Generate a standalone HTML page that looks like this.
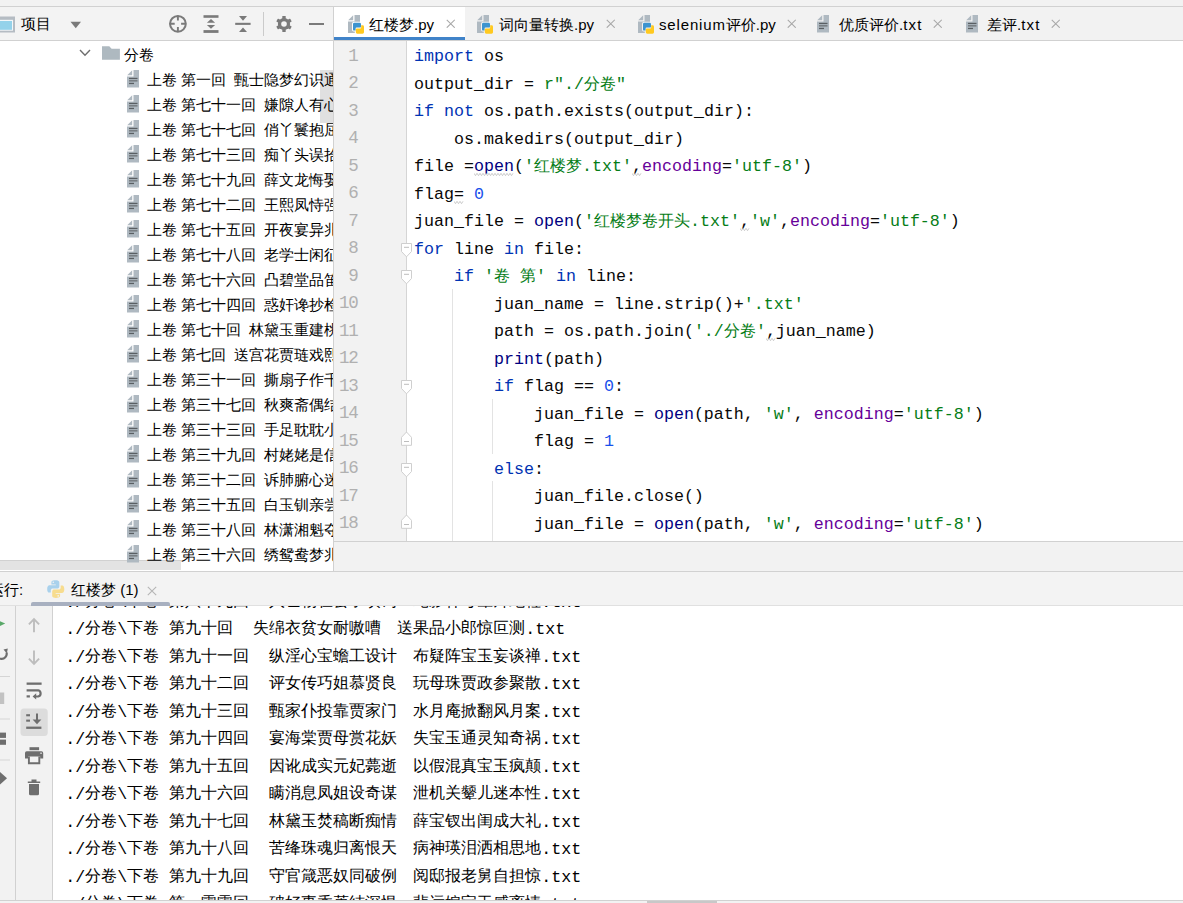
<!DOCTYPE html><html><head><meta charset="utf-8"><style>
html,body{margin:0;padding:0}body{width:1183px;height:903px;overflow:hidden;position:relative;background:#f2f2f2;font-family:'Liberation Sans',sans-serif;}
div,span{box-sizing:border-box}
.abs{position:absolute}
.t{position:absolute;white-space:pre;line-height:25px;font-size:15px;color:#000}
.cl{position:absolute;left:0;white-space:pre;height:27.5px;line-height:27.5px;font-size:16.667px;color:#080808;font-family:'Liberation Mono',monospace;}
.kw{color:#0033b3}.st{color:#067d17}.nu{color:#1750eb}.pa{color:#660099}.bi{color:#000080}
.cj{font-size:16px}
</style></head><body>
<div style="position:absolute;left:0px;top:0px;width:1183px;height:6px;background:#f2f2f2"></div>
<div style="position:absolute;left:0px;top:6px;width:1183px;height:1px;background:#d1d1d1"></div>
<div style="position:absolute;left:0px;top:7px;width:333px;height:33px;background:#f3f3f3"></div>
<div style="position:absolute;left:0px;top:40px;width:333px;height:1px;background:#d1d1d1"></div>
<div style="position:absolute;left:0px;top:41px;width:333px;height:530px;background:#fff"></div>
<div style="position:absolute;left:333px;top:7px;width:1px;height:564px;background:#d1d1d1"></div>
<div style="position:absolute;left:334px;top:7px;width:849px;height:33px;background:#f2f2f2"></div>
<div style="position:absolute;left:334px;top:40px;width:849px;height:1px;background:#d1d1d1"></div>
<div style="position:absolute;left:334px;top:41px;width:849px;height:500px;background:#fff"></div>
<div style="position:absolute;left:334px;top:41px;width:72px;height:500px;background:#f2f2f2"></div>
<div style="position:absolute;left:406px;top:41px;width:1px;height:500px;background:#d5d5d5"></div>
<div style="position:absolute;left:334px;top:541px;width:849px;height:1px;background:#d1d1d1"></div>
<div style="position:absolute;left:334px;top:542px;width:849px;height:29px;background:#f2f2f2"></div>
<div style="position:absolute;left:0px;top:571px;width:1183px;height:1px;background:#d1d1d1"></div>
<div style="position:absolute;left:0px;top:572px;width:1183px;height:33px;background:#f3f3f3"></div>
<div style="position:absolute;left:0px;top:605px;width:1183px;height:1px;background:#e0e0e0"></div>
<div style="position:absolute;left:0px;top:606px;width:1183px;height:294px;background:#fff"></div>
<div style="position:absolute;left:0px;top:606px;width:52px;height:294px;background:#f2f2f2"></div>
<div style="position:absolute;left:15px;top:606px;width:1px;height:294px;background:#d1d1d1"></div>
<div style="position:absolute;left:52px;top:606px;width:1px;height:294px;background:#d1d1d1"></div>
<div style="position:absolute;left:0px;top:900px;width:1183px;height:1px;background:#d1d1d1"></div>
<div style="position:absolute;left:0px;top:901px;width:1183px;height:2px;background:#f2f2f2"></div>
<div style="position:absolute;left:647px;top:901px;width:70px;height:2px;background:#c8c8c8"></div>
<svg class="abs" style="left:0;top:16px" width="16" height="17" viewBox="0 0 16 17"><rect x="-2" y="0.5" width="17" height="16" fill="#b5bcc3"/><rect x="-2" y="3.8" width="15" height="10.9" fill="#f4f7f9"/><rect x="-2" y="5" width="14" height="8.8" fill="#94d2ea"/></svg>
<div class="t" style="left:21px;top:10.5px;font-size:15px">项目</div>
<svg class="abs" style="left:70px;top:21px" width="12" height="8" viewBox="0 0 12 8"><path d="M0.5 0.8 H11 L5.75 7.2 Z" fill="#7a7a7a"/></svg>
<svg class="abs" style="left:168px;top:14px" width="20" height="20" viewBox="0 0 20 20"><circle cx="9.9" cy="9.8" r="7.9" fill="none" stroke="#7a7a7a" stroke-width="2"/><path d="M9.9 1.8 V6.6 M9.9 13 V17.8 M1.9 9.8 H6.7 M13.1 9.8 H17.9" stroke="#7a7a7a" stroke-width="1.9"/></svg>
<svg class="abs" style="left:203px;top:15px" width="16" height="19" viewBox="0 0 16 19"><rect x="0.5" y="0.2" width="15" height="2.6" fill="#7a7a7a"/><rect x="0.5" y="15.1" width="15" height="2.8" fill="#7a7a7a"/><path d="M3.9 7.8 H12.1 L8 4 Z M3.9 9.9 H12.1 L8 13.7 Z" fill="#7a7a7a"/></svg>
<svg class="abs" style="left:235px;top:15px" width="16" height="18" viewBox="0 0 16 18"><rect x="0.2" y="7.8" width="15.4" height="2.1" fill="#7a7a7a"/><path d="M4 1 H12 L8 5.7 Z M4 16.9 H12 L8 12.4 Z" fill="#7a7a7a"/></svg>
<div style="position:absolute;left:263px;top:12px;width:1px;height:24px;background:#cbcbcb"></div>
<svg class="abs" style="left:276px;top:16px" width="16" height="16" viewBox="0 0 16 16"><g fill="#7a7a7a"><circle cx="8" cy="8" r="6.1"/><rect x="6.3" y="0" width="3.4" height="16" rx="0.6"/><rect x="6.3" y="0" width="3.4" height="16" rx="0.6" transform="rotate(60 8 8)"/><rect x="6.3" y="0" width="3.4" height="16" rx="0.6" transform="rotate(120 8 8)"/></g><circle cx="8" cy="8" r="2.8" fill="#f3f3f3"/></svg>
<div style="position:absolute;left:309px;top:22.8px;width:15.4px;height:2.2px;background:#7a7a7a"></div>
<div class="abs" style="left:0;top:41px;width:333px;height:530px;overflow:hidden">
<svg class="abs" style="left:79px;top:8px" width="12" height="8" viewBox="0 0 12 8"><path d="M1 1 L6 6.3 L11 1" fill="none" stroke="#6e6e6e" stroke-width="1.4"/></svg>
<svg class="abs" style="left:102px;top:5px" width="18" height="14" viewBox="0 0 18 14"><path d="M0 0.3 H7.3 L9.6 2.7 H17.9 V13.7 H0 Z" fill="#aeb9c0"/></svg>
<div class="t" style="left:124px;top:0.5px;">分卷</div>
<div style="position:absolute;left:320px;top:29px;width:13px;height:52.5px;background:rgba(0,0,0,0.12)"></div>
<div style="position:absolute;left:0px;top:518.5px;width:181px;height:10px;background:rgba(0,0,0,0.11);border-top:1px solid rgba(0,0,0,0.08)"></div>
<svg class="abs" style="left:127px;top:29.1px" width="18" height="20" viewBox="0 0 18 20"><path d="M6.5 0 H12 V17.6 H0 V6.5 H6.5 Z" fill="#afb9c1"/><path d="M5.2 0.2 V5.2 H0.2 Z" fill="#afb9c1"/><rect x="2" y="7.8" width="8.5" height="1.3" fill="#5a5f63"/><rect x="2" y="10.2" width="8.5" height="1.3" fill="#6d7276"/><rect x="2" y="12.8" width="5" height="1.3" fill="#5a5f63"/></svg>
<div class="t" style="left:147px;top:25.5px;word-spacing:-0.25px">上卷 第一回  甄士隐梦幻识通灵　贾雨村风尘怀闺秀</div>
<svg class="abs" style="left:127px;top:54.1px" width="18" height="20" viewBox="0 0 18 20"><path d="M6.5 0 H12 V17.6 H0 V6.5 H6.5 Z" fill="#afb9c1"/><path d="M5.2 0.2 V5.2 H0.2 Z" fill="#afb9c1"/><rect x="2" y="7.8" width="8.5" height="1.3" fill="#5a5f63"/><rect x="2" y="10.2" width="8.5" height="1.3" fill="#6d7276"/><rect x="2" y="12.8" width="5" height="1.3" fill="#5a5f63"/></svg>
<div class="t" style="left:147px;top:50.5px;word-spacing:-0.25px">上卷 第七十一回  嫌隙人有心生嫌隙　鸳鸯女无意遇鸳鸯</div>
<svg class="abs" style="left:127px;top:79.1px" width="18" height="20" viewBox="0 0 18 20"><path d="M6.5 0 H12 V17.6 H0 V6.5 H6.5 Z" fill="#afb9c1"/><path d="M5.2 0.2 V5.2 H0.2 Z" fill="#afb9c1"/><rect x="2" y="7.8" width="8.5" height="1.3" fill="#5a5f63"/><rect x="2" y="10.2" width="8.5" height="1.3" fill="#6d7276"/><rect x="2" y="12.8" width="5" height="1.3" fill="#5a5f63"/></svg>
<div class="t" style="left:147px;top:75.5px;word-spacing:-0.25px">上卷 第七十七回  俏丫鬟抱屈夭风流　美优伶斩情归水月</div>
<svg class="abs" style="left:127px;top:104.1px" width="18" height="20" viewBox="0 0 18 20"><path d="M6.5 0 H12 V17.6 H0 V6.5 H6.5 Z" fill="#afb9c1"/><path d="M5.2 0.2 V5.2 H0.2 Z" fill="#afb9c1"/><rect x="2" y="7.8" width="8.5" height="1.3" fill="#5a5f63"/><rect x="2" y="10.2" width="8.5" height="1.3" fill="#6d7276"/><rect x="2" y="12.8" width="5" height="1.3" fill="#5a5f63"/></svg>
<div class="t" style="left:147px;top:100.5px;word-spacing:-0.25px">上卷 第七十三回  痴丫头误拾绣春囊　懦小姐不问累金凤</div>
<svg class="abs" style="left:127px;top:129.1px" width="18" height="20" viewBox="0 0 18 20"><path d="M6.5 0 H12 V17.6 H0 V6.5 H6.5 Z" fill="#afb9c1"/><path d="M5.2 0.2 V5.2 H0.2 Z" fill="#afb9c1"/><rect x="2" y="7.8" width="8.5" height="1.3" fill="#5a5f63"/><rect x="2" y="10.2" width="8.5" height="1.3" fill="#6d7276"/><rect x="2" y="12.8" width="5" height="1.3" fill="#5a5f63"/></svg>
<div class="t" style="left:147px;top:125.5px;word-spacing:-0.25px">上卷 第七十九回  薛文龙悔娶河东狮　贾迎春误嫁中山狼</div>
<svg class="abs" style="left:127px;top:154.1px" width="18" height="20" viewBox="0 0 18 20"><path d="M6.5 0 H12 V17.6 H0 V6.5 H6.5 Z" fill="#afb9c1"/><path d="M5.2 0.2 V5.2 H0.2 Z" fill="#afb9c1"/><rect x="2" y="7.8" width="8.5" height="1.3" fill="#5a5f63"/><rect x="2" y="10.2" width="8.5" height="1.3" fill="#6d7276"/><rect x="2" y="12.8" width="5" height="1.3" fill="#5a5f63"/></svg>
<div class="t" style="left:147px;top:150.5px;word-spacing:-0.25px">上卷 第七十二回  王熙凤恃强羞说病　来旺妇倚势霸成亲</div>
<svg class="abs" style="left:127px;top:179.1px" width="18" height="20" viewBox="0 0 18 20"><path d="M6.5 0 H12 V17.6 H0 V6.5 H6.5 Z" fill="#afb9c1"/><path d="M5.2 0.2 V5.2 H0.2 Z" fill="#afb9c1"/><rect x="2" y="7.8" width="8.5" height="1.3" fill="#5a5f63"/><rect x="2" y="10.2" width="8.5" height="1.3" fill="#6d7276"/><rect x="2" y="12.8" width="5" height="1.3" fill="#5a5f63"/></svg>
<div class="t" style="left:147px;top:175.5px;word-spacing:-0.25px">上卷 第七十五回  开夜宴异兆发悲音　赏中秋新词得佳谶</div>
<svg class="abs" style="left:127px;top:204.1px" width="18" height="20" viewBox="0 0 18 20"><path d="M6.5 0 H12 V17.6 H0 V6.5 H6.5 Z" fill="#afb9c1"/><path d="M5.2 0.2 V5.2 H0.2 Z" fill="#afb9c1"/><rect x="2" y="7.8" width="8.5" height="1.3" fill="#5a5f63"/><rect x="2" y="10.2" width="8.5" height="1.3" fill="#6d7276"/><rect x="2" y="12.8" width="5" height="1.3" fill="#5a5f63"/></svg>
<div class="t" style="left:147px;top:200.5px;word-spacing:-0.25px">上卷 第七十八回  老学士闲征姽婳词　痴公子杜撰芙蓉诔</div>
<svg class="abs" style="left:127px;top:229.1px" width="18" height="20" viewBox="0 0 18 20"><path d="M6.5 0 H12 V17.6 H0 V6.5 H6.5 Z" fill="#afb9c1"/><path d="M5.2 0.2 V5.2 H0.2 Z" fill="#afb9c1"/><rect x="2" y="7.8" width="8.5" height="1.3" fill="#5a5f63"/><rect x="2" y="10.2" width="8.5" height="1.3" fill="#6d7276"/><rect x="2" y="12.8" width="5" height="1.3" fill="#5a5f63"/></svg>
<div class="t" style="left:147px;top:225.5px;word-spacing:-0.25px">上卷 第七十六回  凸碧堂品笛感凄清　凹晶馆联诗悲寂寞</div>
<svg class="abs" style="left:127px;top:254.1px" width="18" height="20" viewBox="0 0 18 20"><path d="M6.5 0 H12 V17.6 H0 V6.5 H6.5 Z" fill="#afb9c1"/><path d="M5.2 0.2 V5.2 H0.2 Z" fill="#afb9c1"/><rect x="2" y="7.8" width="8.5" height="1.3" fill="#5a5f63"/><rect x="2" y="10.2" width="8.5" height="1.3" fill="#6d7276"/><rect x="2" y="12.8" width="5" height="1.3" fill="#5a5f63"/></svg>
<div class="t" style="left:147px;top:250.5px;word-spacing:-0.25px">上卷 第七十四回  惑奸谗抄检大观园　矢孤介杜绝宁国府</div>
<svg class="abs" style="left:127px;top:279.1px" width="18" height="20" viewBox="0 0 18 20"><path d="M6.5 0 H12 V17.6 H0 V6.5 H6.5 Z" fill="#afb9c1"/><path d="M5.2 0.2 V5.2 H0.2 Z" fill="#afb9c1"/><rect x="2" y="7.8" width="8.5" height="1.3" fill="#5a5f63"/><rect x="2" y="10.2" width="8.5" height="1.3" fill="#6d7276"/><rect x="2" y="12.8" width="5" height="1.3" fill="#5a5f63"/></svg>
<div class="t" style="left:147px;top:275.5px;word-spacing:-0.25px">上卷 第七十回  林黛玉重建桃花社　史湘云偶填柳絮词</div>
<svg class="abs" style="left:127px;top:304.1px" width="18" height="20" viewBox="0 0 18 20"><path d="M6.5 0 H12 V17.6 H0 V6.5 H6.5 Z" fill="#afb9c1"/><path d="M5.2 0.2 V5.2 H0.2 Z" fill="#afb9c1"/><rect x="2" y="7.8" width="8.5" height="1.3" fill="#5a5f63"/><rect x="2" y="10.2" width="8.5" height="1.3" fill="#6d7276"/><rect x="2" y="12.8" width="5" height="1.3" fill="#5a5f63"/></svg>
<div class="t" style="left:147px;top:300.5px;word-spacing:-0.25px">上卷 第七回  送宫花贾琏戏熙凤　宴宁府宝玉会秦钟</div>
<svg class="abs" style="left:127px;top:329.1px" width="18" height="20" viewBox="0 0 18 20"><path d="M6.5 0 H12 V17.6 H0 V6.5 H6.5 Z" fill="#afb9c1"/><path d="M5.2 0.2 V5.2 H0.2 Z" fill="#afb9c1"/><rect x="2" y="7.8" width="8.5" height="1.3" fill="#5a5f63"/><rect x="2" y="10.2" width="8.5" height="1.3" fill="#6d7276"/><rect x="2" y="12.8" width="5" height="1.3" fill="#5a5f63"/></svg>
<div class="t" style="left:147px;top:325.5px;word-spacing:-0.25px">上卷 第三十一回  撕扇子作千金一笑　因麒麟伏白首双星</div>
<svg class="abs" style="left:127px;top:354.1px" width="18" height="20" viewBox="0 0 18 20"><path d="M6.5 0 H12 V17.6 H0 V6.5 H6.5 Z" fill="#afb9c1"/><path d="M5.2 0.2 V5.2 H0.2 Z" fill="#afb9c1"/><rect x="2" y="7.8" width="8.5" height="1.3" fill="#5a5f63"/><rect x="2" y="10.2" width="8.5" height="1.3" fill="#6d7276"/><rect x="2" y="12.8" width="5" height="1.3" fill="#5a5f63"/></svg>
<div class="t" style="left:147px;top:350.5px;word-spacing:-0.25px">上卷 第三十七回  秋爽斋偶结海棠社　蘅芜苑夜拟菊花题</div>
<svg class="abs" style="left:127px;top:379.1px" width="18" height="20" viewBox="0 0 18 20"><path d="M6.5 0 H12 V17.6 H0 V6.5 H6.5 Z" fill="#afb9c1"/><path d="M5.2 0.2 V5.2 H0.2 Z" fill="#afb9c1"/><rect x="2" y="7.8" width="8.5" height="1.3" fill="#5a5f63"/><rect x="2" y="10.2" width="8.5" height="1.3" fill="#6d7276"/><rect x="2" y="12.8" width="5" height="1.3" fill="#5a5f63"/></svg>
<div class="t" style="left:147px;top:375.5px;word-spacing:-0.25px">上卷 第三十三回  手足耽耽小动唇舌　不肖种种大承笞挞</div>
<svg class="abs" style="left:127px;top:404.1px" width="18" height="20" viewBox="0 0 18 20"><path d="M6.5 0 H12 V17.6 H0 V6.5 H6.5 Z" fill="#afb9c1"/><path d="M5.2 0.2 V5.2 H0.2 Z" fill="#afb9c1"/><rect x="2" y="7.8" width="8.5" height="1.3" fill="#5a5f63"/><rect x="2" y="10.2" width="8.5" height="1.3" fill="#6d7276"/><rect x="2" y="12.8" width="5" height="1.3" fill="#5a5f63"/></svg>
<div class="t" style="left:147px;top:400.5px;word-spacing:-0.25px">上卷 第三十九回  村姥姥是信口开合　情哥哥偏寻根究底</div>
<svg class="abs" style="left:127px;top:429.1px" width="18" height="20" viewBox="0 0 18 20"><path d="M6.5 0 H12 V17.6 H0 V6.5 H6.5 Z" fill="#afb9c1"/><path d="M5.2 0.2 V5.2 H0.2 Z" fill="#afb9c1"/><rect x="2" y="7.8" width="8.5" height="1.3" fill="#5a5f63"/><rect x="2" y="10.2" width="8.5" height="1.3" fill="#6d7276"/><rect x="2" y="12.8" width="5" height="1.3" fill="#5a5f63"/></svg>
<div class="t" style="left:147px;top:425.5px;word-spacing:-0.25px">上卷 第三十二回  诉肺腑心迷活宝玉　含耻辱情烈死金钏</div>
<svg class="abs" style="left:127px;top:454.1px" width="18" height="20" viewBox="0 0 18 20"><path d="M6.5 0 H12 V17.6 H0 V6.5 H6.5 Z" fill="#afb9c1"/><path d="M5.2 0.2 V5.2 H0.2 Z" fill="#afb9c1"/><rect x="2" y="7.8" width="8.5" height="1.3" fill="#5a5f63"/><rect x="2" y="10.2" width="8.5" height="1.3" fill="#6d7276"/><rect x="2" y="12.8" width="5" height="1.3" fill="#5a5f63"/></svg>
<div class="t" style="left:147px;top:450.5px;word-spacing:-0.25px">上卷 第三十五回  白玉钏亲尝莲叶羹　黄金莺巧结梅花络</div>
<svg class="abs" style="left:127px;top:479.1px" width="18" height="20" viewBox="0 0 18 20"><path d="M6.5 0 H12 V17.6 H0 V6.5 H6.5 Z" fill="#afb9c1"/><path d="M5.2 0.2 V5.2 H0.2 Z" fill="#afb9c1"/><rect x="2" y="7.8" width="8.5" height="1.3" fill="#5a5f63"/><rect x="2" y="10.2" width="8.5" height="1.3" fill="#6d7276"/><rect x="2" y="12.8" width="5" height="1.3" fill="#5a5f63"/></svg>
<div class="t" style="left:147px;top:475.5px;word-spacing:-0.25px">上卷 第三十八回  林潇湘魁夺菊花诗　薛蘅芜讽和螃蟹咏</div>
<svg class="abs" style="left:127px;top:504.1px" width="18" height="20" viewBox="0 0 18 20"><path d="M6.5 0 H12 V17.6 H0 V6.5 H6.5 Z" fill="#afb9c1"/><path d="M5.2 0.2 V5.2 H0.2 Z" fill="#afb9c1"/><rect x="2" y="7.8" width="8.5" height="1.3" fill="#5a5f63"/><rect x="2" y="10.2" width="8.5" height="1.3" fill="#6d7276"/><rect x="2" y="12.8" width="5" height="1.3" fill="#5a5f63"/></svg>
<div class="t" style="left:147px;top:500.5px;word-spacing:-0.25px">上卷 第三十六回  绣鸳鸯梦兆绛芸轩　识分定情悟梨香院</div>
</div>
<div style="position:absolute;left:334px;top:7px;width:131px;height:30px;background:#fff"></div>
<div style="position:absolute;left:334px;top:37px;width:131px;height:3px;background:#4083c9"></div>
<svg class="abs" style="left:348px;top:15px" width="18" height="20" viewBox="0 0 18 20"><path d="M6.5 0 H12 V17.9 H0 V6.5 H6.5 Z" fill="#afb9c1"/><path d="M5.2 0.2 V5.2 H0.2 Z" fill="#afb9c1"/><path d="M6.4 6.8 H12.2 Q14 6.8 14 8.6 V9.3 H15.2 Q17 9.3 17 11.1 V17.6 Q17 19.7 14.9 19.7 H8.6 Q6.8 19.7 6.8 17.9 V16.6 H5.8 Q4 16.6 4 14.8 V8.8 Q4 6.8 6.4 6.8 Z" fill="#fff"/><path d="M6.4 7.8 H11.6 Q13 7.8 13 9.2 V11.4 Q13 12.6 11.8 12.6 H8.6 Q7.6 12.6 7.6 13.6 V15.6 H6.2 Q5 15.6 5 14.4 V9.2 Q5 7.8 6.4 7.8 Z" fill="#3d94cf"/><path d="M14.6 10.3 Q16 10.3 16 11.7 V17.3 Q16 18.7 14.6 18.7 H9.2 Q7.8 18.7 7.8 17.3 V14.6 Q7.8 13.4 9 13.4 H12.2 Q13.2 13.4 13.2 12.4 V10.3 Z" fill="#ffc91f"/></svg>
<div class="t" style="left:369px;top:12px;">红楼梦.py</div>
<svg class="abs" style="left:445.5px;top:18.8px" width="9.5" height="9.5" viewBox="0 0 10 10"><path d="M0.8 0.8 L9.2 9.2 M9.2 0.8 L0.8 9.2" stroke="#a8a8a8" stroke-width="1.1"/></svg>
<svg class="abs" style="left:477px;top:15px" width="18" height="20" viewBox="0 0 18 20"><path d="M6.5 0 H12 V17.9 H0 V6.5 H6.5 Z" fill="#afb9c1"/><path d="M5.2 0.2 V5.2 H0.2 Z" fill="#afb9c1"/><path d="M6.4 6.8 H12.2 Q14 6.8 14 8.6 V9.3 H15.2 Q17 9.3 17 11.1 V17.6 Q17 19.7 14.9 19.7 H8.6 Q6.8 19.7 6.8 17.9 V16.6 H5.8 Q4 16.6 4 14.8 V8.8 Q4 6.8 6.4 6.8 Z" fill="#f2f2f2"/><path d="M6.4 7.8 H11.6 Q13 7.8 13 9.2 V11.4 Q13 12.6 11.8 12.6 H8.6 Q7.6 12.6 7.6 13.6 V15.6 H6.2 Q5 15.6 5 14.4 V9.2 Q5 7.8 6.4 7.8 Z" fill="#3d94cf"/><path d="M14.6 10.3 Q16 10.3 16 11.7 V17.3 Q16 18.7 14.6 18.7 H9.2 Q7.8 18.7 7.8 17.3 V14.6 Q7.8 13.4 9 13.4 H12.2 Q13.2 13.4 13.2 12.4 V10.3 Z" fill="#ffc91f"/></svg>
<div class="t" style="left:499px;top:12px;">词向量转换.py</div>
<svg class="abs" style="left:605.5px;top:18.8px" width="9.5" height="9.5" viewBox="0 0 10 10"><path d="M0.8 0.8 L9.2 9.2 M9.2 0.8 L0.8 9.2" stroke="#a8a8a8" stroke-width="1.1"/></svg>
<svg class="abs" style="left:638px;top:15px" width="18" height="20" viewBox="0 0 18 20"><path d="M6.5 0 H12 V17.9 H0 V6.5 H6.5 Z" fill="#afb9c1"/><path d="M5.2 0.2 V5.2 H0.2 Z" fill="#afb9c1"/><path d="M6.4 6.8 H12.2 Q14 6.8 14 8.6 V9.3 H15.2 Q17 9.3 17 11.1 V17.6 Q17 19.7 14.9 19.7 H8.6 Q6.8 19.7 6.8 17.9 V16.6 H5.8 Q4 16.6 4 14.8 V8.8 Q4 6.8 6.4 6.8 Z" fill="#f2f2f2"/><path d="M6.4 7.8 H11.6 Q13 7.8 13 9.2 V11.4 Q13 12.6 11.8 12.6 H8.6 Q7.6 12.6 7.6 13.6 V15.6 H6.2 Q5 15.6 5 14.4 V9.2 Q5 7.8 6.4 7.8 Z" fill="#3d94cf"/><path d="M14.6 10.3 Q16 10.3 16 11.7 V17.3 Q16 18.7 14.6 18.7 H9.2 Q7.8 18.7 7.8 17.3 V14.6 Q7.8 13.4 9 13.4 H12.2 Q13.2 13.4 13.2 12.4 V10.3 Z" fill="#ffc91f"/></svg>
<div class="t" style="left:659px;top:12px;"><span style="letter-spacing:0.85px">selenium</span>评价.py</div>
<svg class="abs" style="left:786.5px;top:18.8px" width="9.5" height="9.5" viewBox="0 0 10 10"><path d="M0.8 0.8 L9.2 9.2 M9.2 0.8 L0.8 9.2" stroke="#a8a8a8" stroke-width="1.1"/></svg>
<svg class="abs" style="left:817px;top:15px" width="18" height="20" viewBox="0 0 18 20"><path d="M6.5 0 H12 V17.6 H0 V6.5 H6.5 Z" fill="#afb9c1"/><path d="M5.2 0.2 V5.2 H0.2 Z" fill="#afb9c1"/><rect x="2" y="7.8" width="8.5" height="1.3" fill="#5a5f63"/><rect x="2" y="10.2" width="8.5" height="1.3" fill="#6d7276"/><rect x="2" y="12.8" width="5" height="1.3" fill="#5a5f63"/></svg>
<div class="t" style="left:839px;top:12px;">优质评价.<span style="letter-spacing:1.2px">txt</span></div>
<svg class="abs" style="left:932.5px;top:18.8px" width="9.5" height="9.5" viewBox="0 0 10 10"><path d="M0.8 0.8 L9.2 9.2 M9.2 0.8 L0.8 9.2" stroke="#a8a8a8" stroke-width="1.1"/></svg>
<svg class="abs" style="left:966px;top:15px" width="18" height="20" viewBox="0 0 18 20"><path d="M6.5 0 H12 V17.6 H0 V6.5 H6.5 Z" fill="#afb9c1"/><path d="M5.2 0.2 V5.2 H0.2 Z" fill="#afb9c1"/><rect x="2" y="7.8" width="8.5" height="1.3" fill="#5a5f63"/><rect x="2" y="10.2" width="8.5" height="1.3" fill="#6d7276"/><rect x="2" y="12.8" width="5" height="1.3" fill="#5a5f63"/></svg>
<div class="t" style="left:987px;top:12px;">差评.<span style="letter-spacing:1.2px">txt</span></div>
<svg class="abs" style="left:1050.5px;top:18.8px" width="9.5" height="9.5" viewBox="0 0 10 10"><path d="M0.8 0.8 L9.2 9.2 M9.2 0.8 L0.8 9.2" stroke="#a8a8a8" stroke-width="1.1"/></svg>
<div class="abs" style="left:334px;top:41px;width:849px;height:500px;overflow:hidden">
<div style="position:absolute;left:118px;top:247.5px;width:1px;height:252.5px;background:#e3e3e3"></div>
<div style="position:absolute;left:158px;top:357.5px;width:1px;height:55.0px;background:#e3e3e3"></div>
<div style="position:absolute;left:158px;top:440.0px;width:1px;height:60.0px;background:#e3e3e3"></div>
<div class="cl" style="left:80px;top:2.0px"><span class="kw">import</span> os</div>
<div class="cl" style="left:0;top:1.8px;width:23.5px;text-align:right;color:#b0b0b0;font-size:17.5px;letter-spacing:-1.2px">1</div>
<div class="cl" style="left:80px;top:29.5px">output_dir = <span class="st">r"./<span class="cj">分卷</span>"</span></div>
<div class="cl" style="left:0;top:29.3px;width:23.5px;text-align:right;color:#b0b0b0;font-size:17.5px;letter-spacing:-1.2px">2</div>
<div class="cl" style="left:80px;top:57.0px"><span class="kw">if</span> <span class="kw">not</span> os.path.exists(output_dir):</div>
<div class="cl" style="left:0;top:56.8px;width:23.5px;text-align:right;color:#b0b0b0;font-size:17.5px;letter-spacing:-1.2px">3</div>
<div class="cl" style="left:80px;top:84.5px">    os.makedirs(output_dir)</div>
<div class="cl" style="left:0;top:84.3px;width:23.5px;text-align:right;color:#b0b0b0;font-size:17.5px;letter-spacing:-1.2px">4</div>
<div class="cl" style="left:80px;top:112.0px">file =<span class="bi">open</span>(<span class="st">'<span class="cj">红楼梦</span>.txt'</span>,<span class="pa">encoding</span>=<span class="st">'utf-8'</span>)</div>
<div class="cl" style="left:0;top:111.8px;width:23.5px;text-align:right;color:#b0b0b0;font-size:17.5px;letter-spacing:-1.2px">5</div>
<div class="cl" style="left:80px;top:139.5px">flag= <span class="nu">0</span></div>
<div class="cl" style="left:0;top:139.3px;width:23.5px;text-align:right;color:#b0b0b0;font-size:17.5px;letter-spacing:-1.2px">6</div>
<div class="cl" style="left:80px;top:167.0px">juan_file = <span class="bi">open</span>(<span class="st">'<span class="cj">红楼梦卷开头</span>.txt'</span>,<span class="st">'w'</span>,<span class="pa">encoding</span>=<span class="st">'utf-8'</span>)</div>
<div class="cl" style="left:0;top:166.8px;width:23.5px;text-align:right;color:#b0b0b0;font-size:17.5px;letter-spacing:-1.2px">7</div>
<div class="cl" style="left:80px;top:194.5px"><span class="kw">for</span> line <span class="kw">in</span> file:</div>
<div class="cl" style="left:0;top:194.3px;width:23.5px;text-align:right;color:#b0b0b0;font-size:17.5px;letter-spacing:-1.2px">8</div>
<div class="cl" style="left:80px;top:222.0px">    <span class="kw">if</span> <span class="st">'<span class="cj">卷</span> <span class="cj">第</span>'</span> <span class="kw">in</span> line:</div>
<div class="cl" style="left:0;top:221.8px;width:23.5px;text-align:right;color:#b0b0b0;font-size:17.5px;letter-spacing:-1.2px">9</div>
<div class="cl" style="left:80px;top:249.5px">        juan_name = line.strip()+<span class="st">'.txt'</span></div>
<div class="cl" style="left:0;top:249.3px;width:23.5px;text-align:right;color:#b0b0b0;font-size:17.5px;letter-spacing:-1.2px">10</div>
<div class="cl" style="left:80px;top:277.0px">        path = os.path.join(<span class="st">'./<span class="cj">分卷</span>'</span>,juan_name)</div>
<div class="cl" style="left:0;top:276.8px;width:23.5px;text-align:right;color:#b0b0b0;font-size:17.5px;letter-spacing:-1.2px">11</div>
<div class="cl" style="left:80px;top:304.5px">        <span class="bi">print</span>(path)</div>
<div class="cl" style="left:0;top:304.3px;width:23.5px;text-align:right;color:#b0b0b0;font-size:17.5px;letter-spacing:-1.2px">12</div>
<div class="cl" style="left:80px;top:332.0px">        <span class="kw">if</span> flag == <span class="nu">0</span>:</div>
<div class="cl" style="left:0;top:331.8px;width:23.5px;text-align:right;color:#b0b0b0;font-size:17.5px;letter-spacing:-1.2px">13</div>
<div class="cl" style="left:80px;top:359.5px">            juan_file = <span class="bi">open</span>(path, <span class="st">'w'</span>, <span class="pa">encoding</span>=<span class="st">'utf-8'</span>)</div>
<div class="cl" style="left:0;top:359.3px;width:23.5px;text-align:right;color:#b0b0b0;font-size:17.5px;letter-spacing:-1.2px">14</div>
<div class="cl" style="left:80px;top:387.0px">            flag = <span class="nu">1</span></div>
<div class="cl" style="left:0;top:386.8px;width:23.5px;text-align:right;color:#b0b0b0;font-size:17.5px;letter-spacing:-1.2px">15</div>
<div class="cl" style="left:80px;top:414.5px">        <span class="kw">else</span>:</div>
<div class="cl" style="left:0;top:414.3px;width:23.5px;text-align:right;color:#b0b0b0;font-size:17.5px;letter-spacing:-1.2px">16</div>
<div class="cl" style="left:80px;top:442.0px">            juan_file.close()</div>
<div class="cl" style="left:0;top:441.8px;width:23.5px;text-align:right;color:#b0b0b0;font-size:17.5px;letter-spacing:-1.2px">17</div>
<div class="cl" style="left:80px;top:469.5px">            juan_file = <span class="bi">open</span>(path, <span class="st">'w'</span>, <span class="pa">encoding</span>=<span class="st">'utf-8'</span>)</div>
<div class="cl" style="left:0;top:469.3px;width:23.5px;text-align:right;color:#b0b0b0;font-size:17.5px;letter-spacing:-1.2px">18</div>
</div>
<svg class="abs" style="left:401px;top:242.85px" width="11" height="15" viewBox="0 0 11 15"><path d="M0.5 0.5 H10.5 V8.5 L5.5 13.8 L0.5 8.5 Z" fill="#fff" stroke="#cfcfcf" stroke-width="1"/><path d="M3 4.3 H8" stroke="#bdbdbd" stroke-width="1"/></svg>
<svg class="abs" style="left:401px;top:270.35px" width="11" height="15" viewBox="0 0 11 15"><path d="M0.5 0.5 H10.5 V8.5 L5.5 13.8 L0.5 8.5 Z" fill="#fff" stroke="#cfcfcf" stroke-width="1"/><path d="M3 4.3 H8" stroke="#bdbdbd" stroke-width="1"/></svg>
<svg class="abs" style="left:401px;top:380.35px" width="11" height="15" viewBox="0 0 11 15"><path d="M0.5 0.5 H10.5 V8.5 L5.5 13.8 L0.5 8.5 Z" fill="#fff" stroke="#cfcfcf" stroke-width="1"/><path d="M3 4.3 H8" stroke="#bdbdbd" stroke-width="1"/></svg>
<svg class="abs" style="left:401px;top:431.25px" width="11" height="15" viewBox="0 0 11 15"><path d="M0.5 14.3 H10.5 V6.3 L5.5 1 L0.5 6.3 Z" fill="#fff" stroke="#cfcfcf" stroke-width="1"/><path d="M3 10.5 H8" stroke="#bdbdbd" stroke-width="1"/></svg>
<svg class="abs" style="left:401px;top:462.85px" width="11" height="15" viewBox="0 0 11 15"><path d="M0.5 0.5 H10.5 V8.5 L5.5 13.8 L0.5 8.5 Z" fill="#fff" stroke="#cfcfcf" stroke-width="1"/><path d="M3 4.3 H8" stroke="#bdbdbd" stroke-width="1"/></svg>
<svg class="abs" style="left:401px;top:513.75px" width="11" height="15" viewBox="0 0 11 15"><path d="M0.5 14.3 H10.5 V6.3 L5.5 1 L0.5 6.3 Z" fill="#fff" stroke="#cfcfcf" stroke-width="1"/><path d="M3 10.5 H8" stroke="#bdbdbd" stroke-width="1"/></svg>
<div class="abs" style="left:0;top:572px;width:1183px;height:33px;overflow:hidden">
<div class="t" style="left:-11px;top:4.5px;">运行:</div>
<svg class="abs" style="left:47px;top:7.5px" width="19" height="19" viewBox="0 0 19 19"><path d="M8.6 0.3 C4.2 0.3 4.4 2.2 4.4 2.2 V4.4 H8.8 V5.2 H2.6 C2.6 5.2 0.2 5 0.2 8.9 C0.2 12.8 2.3 12.6 2.3 12.6 H3.8 V10.7 C3.8 10.7 3.7 8.6 5.9 8.6 H10.2 C10.2 8.6 12.3 8.7 12.3 6.6 V2.5 C12.3 2.5 12.6 0.3 8.6 0.3 Z M6.3 1.5 A0.8 0.8 0 1 1 6.3 3.1 A0.8 0.8 0 1 1 6.3 1.5 Z" fill="#a9d1ec" fill-rule="evenodd"/><path d="M8.9 17.9 C13.3 17.9 13.1 16 13.1 16 V13.8 H8.7 V13 H14.9 C14.9 13 17.3 13.2 17.3 9.3 C17.3 5.4 15.2 5.6 15.2 5.6 H13.7 V7.5 C13.7 7.5 13.8 9.6 11.6 9.6 H7.3 C7.3 9.6 5.2 9.5 5.2 11.6 V15.7 C5.2 15.7 4.9 17.9 8.9 17.9 Z M11.2 15.1 A0.8 0.8 0 1 1 11.2 16.7 A0.8 0.8 0 1 1 11.2 15.1 Z" fill="#f7dc8e" fill-rule="evenodd"/></svg>
<div class="t" style="left:71px;top:4.5px;">红楼梦 (1)</div>
</div>
<svg class="abs" style="left:147px;top:586px" width="10" height="10" viewBox="0 0 10 10"><path d="M0.8 0.8 L9.2 9.2 M9.2 0.8 L0.8 9.2" stroke="#b5b5b5" stroke-width="1.1"/></svg>
<div class="abs" style="left:31px;top:602px;width:139px;height:4px;background:#a8b0c0;border-radius:2px 2px 0 0"></div>
<div class="abs" style="left:53px;top:606px;width:1130px;height:294px;overflow:hidden">
<div class="cl" style="left:12.3px;top:-18.25px;color:#000"><span style="position:relative;top:0.8px">./</span><span class="cj">分卷</span><span style="position:relative;top:0.8px">\</span><span class="cj">下卷</span><span style="position:relative;top:0.8px"> </span><span class="cj">第八十九回</span><span style="position:relative;top:0.8px">  </span><span class="cj">人亡物在公子填词　蛇影杯弓颦卿绝粒</span><span style="position:relative;top:0.8px">.txt</span></div>
<div class="cl" style="left:12.3px;top:9.25px;color:#000"><span style="position:relative;top:0.8px">./</span><span class="cj">分卷</span><span style="position:relative;top:0.8px">\</span><span class="cj">下卷</span><span style="position:relative;top:0.8px"> </span><span class="cj">第九十回</span><span style="position:relative;top:0.8px">  </span><span class="cj">失绵衣贫女耐嗷嘈　送果品小郎惊叵测</span><span style="position:relative;top:0.8px">.txt</span></div>
<div class="cl" style="left:12.3px;top:36.75px;color:#000"><span style="position:relative;top:0.8px">./</span><span class="cj">分卷</span><span style="position:relative;top:0.8px">\</span><span class="cj">下卷</span><span style="position:relative;top:0.8px"> </span><span class="cj">第九十一回</span><span style="position:relative;top:0.8px">  </span><span class="cj">纵淫心宝蟾工设计　布疑阵宝玉妄谈禅</span><span style="position:relative;top:0.8px">.txt</span></div>
<div class="cl" style="left:12.3px;top:64.25px;color:#000"><span style="position:relative;top:0.8px">./</span><span class="cj">分卷</span><span style="position:relative;top:0.8px">\</span><span class="cj">下卷</span><span style="position:relative;top:0.8px"> </span><span class="cj">第九十二回</span><span style="position:relative;top:0.8px">  </span><span class="cj">评女传巧姐慕贤良　玩母珠贾政参聚散</span><span style="position:relative;top:0.8px">.txt</span></div>
<div class="cl" style="left:12.3px;top:91.75px;color:#000"><span style="position:relative;top:0.8px">./</span><span class="cj">分卷</span><span style="position:relative;top:0.8px">\</span><span class="cj">下卷</span><span style="position:relative;top:0.8px"> </span><span class="cj">第九十三回</span><span style="position:relative;top:0.8px">  </span><span class="cj">甄家仆投靠贾家门　水月庵掀翻风月案</span><span style="position:relative;top:0.8px">.txt</span></div>
<div class="cl" style="left:12.3px;top:119.25px;color:#000"><span style="position:relative;top:0.8px">./</span><span class="cj">分卷</span><span style="position:relative;top:0.8px">\</span><span class="cj">下卷</span><span style="position:relative;top:0.8px"> </span><span class="cj">第九十四回</span><span style="position:relative;top:0.8px">  </span><span class="cj">宴海棠贾母赏花妖　失宝玉通灵知奇祸</span><span style="position:relative;top:0.8px">.txt</span></div>
<div class="cl" style="left:12.3px;top:146.75px;color:#000"><span style="position:relative;top:0.8px">./</span><span class="cj">分卷</span><span style="position:relative;top:0.8px">\</span><span class="cj">下卷</span><span style="position:relative;top:0.8px"> </span><span class="cj">第九十五回</span><span style="position:relative;top:0.8px">  </span><span class="cj">因讹成实元妃薨逝　以假混真宝玉疯颠</span><span style="position:relative;top:0.8px">.txt</span></div>
<div class="cl" style="left:12.3px;top:174.25px;color:#000"><span style="position:relative;top:0.8px">./</span><span class="cj">分卷</span><span style="position:relative;top:0.8px">\</span><span class="cj">下卷</span><span style="position:relative;top:0.8px"> </span><span class="cj">第九十六回</span><span style="position:relative;top:0.8px">  </span><span class="cj">瞒消息凤姐设奇谋　泄机关颦儿迷本性</span><span style="position:relative;top:0.8px">.txt</span></div>
<div class="cl" style="left:12.3px;top:201.75px;color:#000"><span style="position:relative;top:0.8px">./</span><span class="cj">分卷</span><span style="position:relative;top:0.8px">\</span><span class="cj">下卷</span><span style="position:relative;top:0.8px"> </span><span class="cj">第九十七回</span><span style="position:relative;top:0.8px">  </span><span class="cj">林黛玉焚稿断痴情　薛宝钗出闺成大礼</span><span style="position:relative;top:0.8px">.txt</span></div>
<div class="cl" style="left:12.3px;top:229.25px;color:#000"><span style="position:relative;top:0.8px">./</span><span class="cj">分卷</span><span style="position:relative;top:0.8px">\</span><span class="cj">下卷</span><span style="position:relative;top:0.8px"> </span><span class="cj">第九十八回</span><span style="position:relative;top:0.8px">  </span><span class="cj">苦绛珠魂归离恨天　病神瑛泪洒相思地</span><span style="position:relative;top:0.8px">.txt</span></div>
<div class="cl" style="left:12.3px;top:256.75px;color:#000"><span style="position:relative;top:0.8px">./</span><span class="cj">分卷</span><span style="position:relative;top:0.8px">\</span><span class="cj">下卷</span><span style="position:relative;top:0.8px"> </span><span class="cj">第九十九回</span><span style="position:relative;top:0.8px">  </span><span class="cj">守官箴恶奴同破例　阅邸报老舅自担惊</span><span style="position:relative;top:0.8px">.txt</span></div>
<div class="cl" style="left:12.3px;top:284.25px;color:#000"><span style="position:relative;top:0.8px">./</span><span class="cj">分卷</span><span style="position:relative;top:0.8px">\</span><span class="cj">下卷</span><span style="position:relative;top:0.8px"> </span><span class="cj">第一零零回</span><span style="position:relative;top:0.8px">  </span><span class="cj">破好事香菱结深恨　悲远嫁宝玉感离情</span><span style="position:relative;top:0.8px">.txt</span></div>
</div>
<svg class="abs" style="left:0;top:606px" width="15" height="294" viewBox="0 606 15 294"><path d="M-3 619.8 L5.2 623.6 L-3 627.4 Z" fill="#59a869"/><path d="M-2 650.5 A5 5 0 1 0 6.5 652.5" fill="none" stroke="#6e6e6e" stroke-width="2.2"/><path d="M3.5 649.5 L7.8 648.5 L6.8 653.5 Z" fill="#6e6e6e"/><rect x="0" y="676" width="10" height="1" fill="#d5d5d5"/><rect x="-4" y="692.5" width="8.2" height="11.5" fill="#c2c2c2"/><rect x="0" y="718.5" width="10" height="1" fill="#d5d5d5"/><rect x="-5" y="732.6" width="11" height="5.3" fill="#6e6e6e"/><rect x="-5" y="739.6" width="11" height="5.2" fill="#6e6e6e"/><rect x="0" y="759.5" width="10" height="1" fill="#d5d5d5"/><path d="M-1 771 L7 778.2 L-1 785.5 L-4 778 Z" fill="#6e6e6e"/></svg>
<svg class="abs" style="left:16px;top:606px" width="36" height="294" viewBox="16 606 36 294"><path d="M34 618.8 V632.2 M28.9 624.4 L34 619.2 L39.1 624.4" fill="none" stroke="#bdbdbd" stroke-width="1.9"/><path d="M34 650.4 V664.2 M28.9 658.6 L34 663.8 L39.1 658.6" fill="none" stroke="#bdbdbd" stroke-width="1.9"/><rect x="26.6" y="682.5" width="15" height="2.3" fill="#6e6e6e"/><path d="M26.6 690.3 H38.2 A3.2 3.2 0 0 1 38.2 696.5 H35" fill="none" stroke="#6e6e6e" stroke-width="2.2"/><path d="M36.2 693.2 L32.6 696.5 L36.2 699.6 Z" fill="#6e6e6e"/><rect x="26.6" y="695.3" width="3.3" height="2.2" fill="#6e6e6e"/><rect x="20.5" y="708.5" width="27.2" height="27.5" rx="3.5" fill="#dcdcdc"/><rect x="26.2" y="714.2" width="3.8" height="2.1" fill="#6e6e6e"/><rect x="26.2" y="719.6" width="3.8" height="2.1" fill="#6e6e6e"/><rect x="26.2" y="726.6" width="15.2" height="2.3" fill="#6e6e6e"/><path d="M37 713.5 V723" stroke="#6e6e6e" stroke-width="2"/><path d="M32.6 719.6 L37 724.2 L41.4 719.6 Z" fill="#6e6e6e"/><rect x="29.5" y="747.2" width="9.6" height="3" fill="#6e6e6e"/><path d="M25 753 Q25 751.3 26.7 751.3 H41.5 Q43.2 751.3 43.2 753 V758.6 H40.2 V756.5 H28 V758.6 H25 Z" fill="#6e6e6e"/><path d="M28.9 756.5 V763.2 H39.3 V756.5" fill="none" stroke="#6e6e6e" stroke-width="1.9"/><rect x="40.3" y="752.6" width="1.5" height="1.2" fill="#f2f2f2"/><path d="M27.8 781.4 H40.2 V783 H27.8 Z M31.5 779.5 H36.5 V781.4 H31.5 Z" fill="#6e6e6e"/><path d="M29 784 H39 V793.8 Q39 795.3 37.5 795.3 H30.5 Q29 795.3 29 793.8 Z" fill="#6e6e6e"/></svg>
<svg class="abs" style="left:474px;top:173.0px" width="41" height="3" viewBox="0 0 41 3"><polyline points="0.00,0.30 1.50,2.70 3.00,0.30 4.50,2.70 6.00,0.30 7.50,2.70 9.00,0.30 10.50,2.70 12.00,0.30 13.50,2.70 15.00,0.30 16.50,2.70 18.00,0.30 19.50,2.70 21.00,0.30 22.50,2.70 24.00,0.30 25.50,2.70 27.00,0.30 28.50,2.70 30.00,0.30 31.50,2.70 33.00,0.30 34.50,2.70 36.00,0.30 37.50,2.70 39.00,0.30" fill="none" stroke="#c6c6c6" stroke-width="0.9"/></svg>
<svg class="abs" style="left:632px;top:173.0px" width="11" height="3" viewBox="0 0 11 3"><polyline points="0.00,0.30 1.50,2.70 3.00,0.30 4.50,2.70 6.00,0.30 7.50,2.70 9.00,0.30" fill="none" stroke="#c6c6c6" stroke-width="0.9"/></svg>
<svg class="abs" style="left:454px;top:200.5px" width="11" height="3" viewBox="0 0 11 3"><polyline points="0.00,0.30 1.50,2.70 3.00,0.30 4.50,2.70 6.00,0.30 7.50,2.70 9.00,0.30" fill="none" stroke="#c6c6c6" stroke-width="0.9"/></svg>
<svg class="abs" style="left:740px;top:228.0px" width="11" height="3" viewBox="0 0 11 3"><polyline points="0.00,0.30 1.50,2.70 3.00,0.30 4.50,2.70 6.00,0.30 7.50,2.70 9.00,0.30" fill="none" stroke="#c6c6c6" stroke-width="0.9"/></svg>
<svg class="abs" style="left:766px;top:338.0px" width="11" height="3" viewBox="0 0 11 3"><polyline points="0.00,0.30 1.50,2.70 3.00,0.30 4.50,2.70 6.00,0.30 7.50,2.70 9.00,0.30" fill="none" stroke="#c6c6c6" stroke-width="0.9"/></svg>
</body></html>
